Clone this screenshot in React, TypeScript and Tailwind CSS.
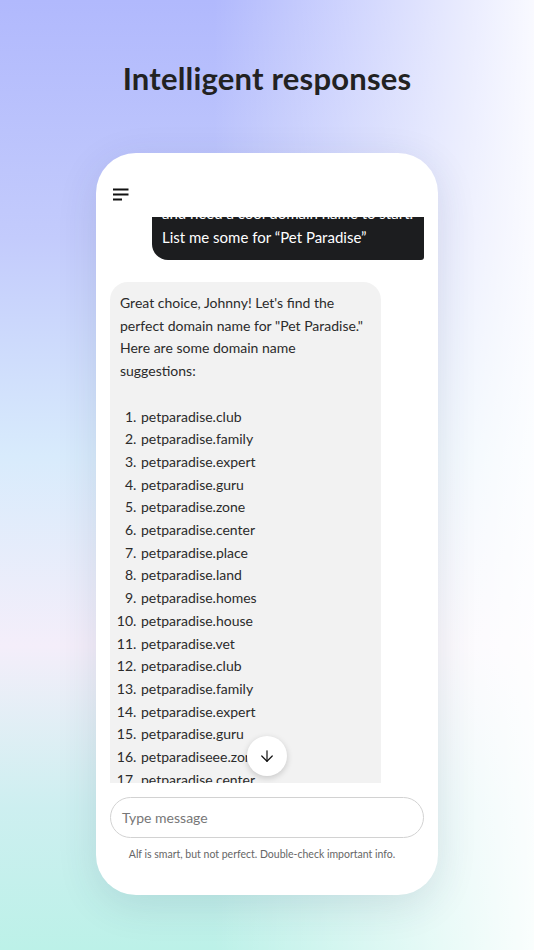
import { ArrowDown } from "lucide-react";

const domains = [
  "petparadise.club",
  "petparadise.family",
  "petparadise.expert",
  "petparadise.guru",
  "petparadise.zone",
  "petparadise.center",
  "petparadise.place",
  "petparadise.land",
  "petparadise.homes",
  "petparadise.house",
  "petparadise.vet",
  "petparadise.club",
  "petparadise.family",
  "petparadise.expert",
  "petparadise.guru",
  "petparadiseee.zone",
  "petparadise.center",
  "petparadise.place",
];

const MenuIcon = () => (
  <svg width="16" height="13" viewBox="0 0 16 13" fill="none">
    <path d="M0 1.5h15.5M0 6.5h15.5M0 11.5h9" stroke="#111" strokeWidth="1.8" />
  </svg>
);

const App = () => {
  return (
    <div className="w-[534px] h-[950px] overflow-hidden flex flex-col items-center pt-[60px] font-['Lato','Noto_Sans',sans-serif] bg-[linear-gradient(to_right,rgba(255,255,255,0)_40%,rgba(255,255,255,0.92)_100%),linear-gradient(to_bottom,#b1b9fd_0%,#c3cbfc_25%,#d8ebfc_48%,#f4eefa_68%,#cdeff0_85%,#bcf1e8_100%)]">
      <h1 className="text-[31px] leading-[36px] font-bold text-[#222] tracking-[0.2px]">
        Intelligent responses
      </h1>

      <div className="mt-[57px] w-[342px] h-[742px] bg-white rounded-[40px] shadow-[0_10px_40px_rgba(40,60,90,0.12)] flex flex-col overflow-hidden">
        {/* header */}
        <div className="h-[64px] shrink-0 pl-[17px] pt-[35px]">
          <MenuIcon />
        </div>

        {/* messages */}
        <div className="relative flex-1 overflow-hidden">
          <div className="mt-[-51px] px-[14px] flex flex-col">
            <div className="self-end w-[272px] bg-[#1c1d1f] text-white text-[15px] leading-[24px] px-[10px] py-[11px] rounded-bl-[16px] rounded-br-[3px] whitespace-nowrap">
              <div>Hi Alf! I'm opening a pet shop</div>
              <div>and need a cool domain name to start.</div>
              <div>List me some for “Pet Paradise”</div>
            </div>

            <div className="mt-[22px] w-[271px] bg-[#f2f2f2] rounded-t-[18px] px-[10px] pt-[10px] pb-[12px] text-[14px] leading-[22.7px] text-[#2b2b2b]">
              <p className="mb-[22.7px]">
                Great choice, Johnny! Let's find the perfect domain name for "Pet
                Paradise." Here are some domain name suggestions:
              </p>
              <ol className="list-decimal pl-[20px]">
                {domains.map((d, i) => (
                  <li key={i} className="pl-[1px]">
                    {d}
                  </li>
                ))}
              </ol>
            </div>
          </div>

          <button className="absolute bottom-[7px] left-1/2 -translate-x-1/2 w-[40px] h-[40px] rounded-full bg-white shadow-[0_2px_6px_rgba(0,0,0,0.18)] flex items-center justify-center">
            <ArrowDown size={18} strokeWidth={1.6} color="#111" />
          </button>
        </div>

        {/* footer */}
        <div className="shrink-0 px-[14px] pt-[14px] pb-[35px]">
          <div className="h-[41px] rounded-full border border-[#d2d2d2] flex items-center px-[11px] text-[14px] text-[#777]">
            Type message
          </div>
          <p className="mt-[10px] pr-[10px] text-[10.5px] leading-[12px] text-[#666] text-center">
            Alf is smart, but not perfect. Double-check important info.
          </p>
        </div>
      </div>
    </div>
  );
};

export default App;
